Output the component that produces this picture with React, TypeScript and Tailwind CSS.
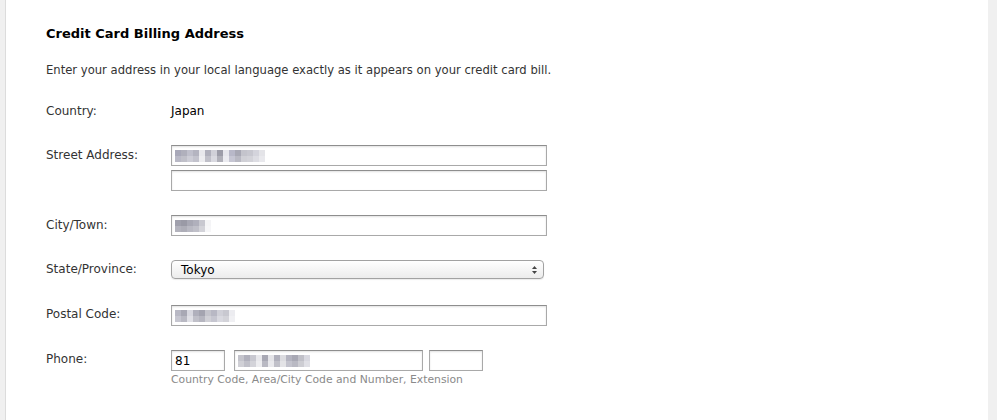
import React from 'react';

const font = { fontFamily: '"DejaVu Sans", "Liberation Sans", sans-serif' };

// pixelated (redacted) text inside a field
function Mosaic({ cells }: { cells: string[] }) {
  return (
    <div className="flex h-[12px] blur-[0.4px]">
      {cells.map((c, i) => (
        <div key={i} className="w-[6px] h-[12px] flex flex-col">
          <div className="h-[6px]" style={{ background: c }} />
          <div className="h-[6px] opacity-80" style={{ background: c }} />
        </div>
      ))}
    </div>
  );
}

function Field({ w, children }: { w: string; children?: React.ReactNode }) {
  return (
    <div
      className={`${w} h-[21px] border border-[#a9a9a9] border-t-[#8e8e8e] bg-white shadow-[inset_0_1px_2px_rgba(0,0,0,0.12)] flex items-center px-[3px] text-[12px] text-black`}
    >
      {children}
    </div>
  );
}

export default function App() {
  return (
    <div className="flex h-[420px] w-[997px] bg-white" style={font}>
      <div className="w-[6px] bg-[#f0f0f0] border-r border-[#dcdcdc]" />
      <div className="flex-1 pl-[40px] text-[#333] text-[12px]">
        <h2 className="mt-[24px] h-[20px] leading-[20px] text-[13px] font-bold text-black">
          Credit Card Billing Address
        </h2>
        <p className="mt-[18px] leading-[16px] text-[11.6px]">
          Enter your address in your local language exactly as it appears on your credit card bill.
        </p>

        <div className="mt-[25px] flex leading-[16px]">
          <div className="w-[125px]">Country:</div>
          <div className="text-black">Japan</div>
        </div>

        <div className="mt-[26px] flex">
          <div className="w-[125px] pt-[2px] leading-[16px]">Street Address:</div>
          <div className="flex flex-col gap-[4px]">
            <Field w="w-[376px]">
              <Mosaic cells={['#a8a8b8', '#b0b0bc', '#c0c0cc', '#b4b4c0', '#e8e8ec', '#b0b0bc', '#d0d0d8', '#9c9ca8', '#e6e6ec', '#b8b8c8', '#a8a8b4', '#c4c4cc', '#c8c8d0', '#d4d4dc', '#e4e4e8']} />
            </Field>
            <Field w="w-[376px]" />
          </div>
        </div>

        <div className="mt-[24px] flex">
          <div className="w-[125px] pt-[2px] leading-[16px]">City/Town:</div>
          <Field w="w-[376px]">
            <Mosaic cells={['#a0a0ac', '#9a9aa6', '#a8a8b4', '#b0b0bc', '#c8c8d0', '#f4f4f6']} />
          </Field>
        </div>

        <div className="mt-[24px] flex">
          <div className="w-[125px] pt-[1px] leading-[16px]">State/Province:</div>
          <div className="w-[373px] h-[19px] rounded-[4px] border border-[#a2a2a2] bg-gradient-to-b from-white to-[#ececec] shadow-[0_1px_1px_rgba(0,0,0,0.08)] flex items-center justify-between pl-[9px] pr-[5px] text-[12px] text-black">
            <span>Tokyo</span>
            <svg width="7" height="10" viewBox="0 0 7 10">
              <path d="M3.5 1 L6 4 H1 Z" fill="#444" />
              <path d="M3.5 9 L6 6 H1 Z" fill="#444" />
            </svg>
          </div>
        </div>

        <div className="mt-[26px] flex">
          <div className="w-[125px] pt-[1px] leading-[16px]">Postal Code:</div>
          <Field w="w-[376px]">
            <Mosaic cells={['#b8b8c4', '#a8a8b4', '#d8d8e0', '#b0b0bc', '#a4a4b0', '#c4c4cc', '#b8b8c4', '#d0d0d8', '#c8c8d0', '#ececf0']} />
          </Field>
        </div>

        <div className="mt-[24px] flex">
          <div className="w-[125px] pt-[1px] leading-[16px]">Phone:</div>
          <div className="flex flex-col">
            <div className="flex">
              <Field w="w-[54px]">81</Field>
              <div className="ml-[9px]">
                <Field w="w-[189px]">
                  <Mosaic cells={['#c4c4cc', '#b0b0bc', '#c8c8d0', '#e8e8ec', '#a8a8b4', '#e4e4e8', '#b0b0bc', '#dcdce0', '#b4b4c0', '#a8a8b4', '#c0c0c8', '#d8d8e0']} />
                </Field>
              </div>
              <div className="ml-[6px]">
                <Field w="w-[54px]" />
              </div>
            </div>
            <div className="mt-[2px] text-[10.8px] leading-[14px] text-[#8a8a8a]">
              Country Code, Area/City Code and Number, Extension
            </div>
          </div>
        </div>
      </div>
      <div className="w-[9px] bg-[#f0f0f0]" />
    </div>
  );
}
